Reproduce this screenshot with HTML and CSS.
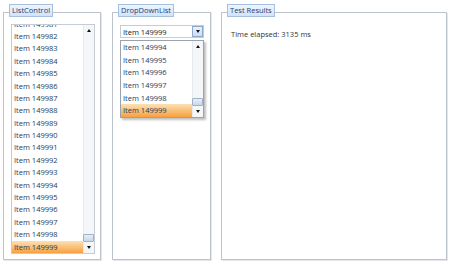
FILE: index.html
```html
<!DOCTYPE html>
<html>
<head>
<meta charset="utf-8">
<link rel="stylesheet" href="styles.css">
</head>
<body>
<div class="panels">
  <div class="group g-list">
    <div class="legend">ListControl</div>
    <div class="listbox">
      <div class="items">
        <div class="item">Item 149981</div>
        <div class="item">Item 149982</div>
        <div class="item">Item 149983</div>
        <div class="item">Item 149984</div>
        <div class="item">Item 149985</div>
        <div class="item">Item 149986</div>
        <div class="item">Item 149987</div>
        <div class="item">Item 149988</div>
        <div class="item">Item 149989</div>
        <div class="item">Item 149990</div>
        <div class="item">Item 149991</div>
        <div class="item">Item 149992</div>
        <div class="item">Item 149993</div>
        <div class="item">Item 149994</div>
        <div class="item">Item 149995</div>
        <div class="item">Item 149996</div>
        <div class="item">Item 149997</div>
        <div class="item">Item 149998</div>
        <div class="item sel">Item 149999</div>
      </div>
      <div class="vscroll">
        <div class="sb-up"><span class="tri-up"></span></div>
        <div class="sb-track"></div>
        <div class="sb-thumb"></div>
        <div class="sb-down"><span class="tri-down"></span></div>
      </div>
    </div>
  </div>
  <div class="group g-drop">
    <div class="legend">DropDownList</div>
    <div class="combo">
      <span class="combo-text">Item 149999</span>
      <span class="combo-btn"><span class="tri-down"></span></span>
    </div>
    <div class="popup">
      <div class="items">
        <div class="item">Item 149994</div>
        <div class="item">Item 149995</div>
        <div class="item">Item 149996</div>
        <div class="item">Item 149997</div>
        <div class="item">Item 149998</div>
        <div class="item sel">Item 149999</div>
      </div>
      <div class="vscroll">
        <div class="sb-up"><span class="tri-up"></span></div>
        <div class="sb-track"></div>
        <div class="sb-thumb"></div>
        <div class="sb-down"><span class="tri-down"></span></div>
      </div>
    </div>
  </div>
  <div class="group g-results">
    <div class="legend">Test Results</div>
    <div class="result-text">Time elapsed: 3135 ms</div>
  </div>
</div>
</body>
</html>
```
FILE: styles.css
```css
* { box-sizing: border-box; }
html, body {
  margin: 0;
  padding: 0;
  background: #ffffff;
  font-family: "Open Sans", "Noto Sans", sans-serif;
  font-size: 7.5px;
  color: #253b5a;
}
.panels {
  display: flex;
  padding: 12px 0 0 3px;
  height: 264px;
}
.group {
  position: relative;
  height: 248px;
  border: 1px solid #bcc3cc;
  box-shadow: inset 1px 1px 0 #ffffff, 1px 1px 0 #e3e6ea;
}
.g-list { width: 98px; margin-right: 11px; }
.g-drop { width: 99px; margin-right: 10px; }
.g-results { width: 226px; }
.legend {
  position: absolute;
  top: -9px;
  left: 5px;
  height: 13px;
  line-height: 11px;
  padding: 0 2px;
  color: #1f3f6e;
  font-size: 7.5px;
  background: linear-gradient(#eef5ff, #d3e3f8);
  border: 1px solid #a7c0e0;
}
.listbox {
  display: flex;
  margin: 11px 0 0 7px;
  width: 84px;
  height: 230px;
  border: 1px solid #c5ccd5;
  background: #ffffff;
}
.items {
  flex: 1;
  display: flex;
  flex-direction: column;
  justify-content: flex-end;
  overflow: hidden;
}
.item {
  flex: none;
  height: 12.4px;
  line-height: 12.4px;
  padding-left: 2px;
  white-space: nowrap;
}
.item.sel {
  background: linear-gradient(#fde0b4, #f7a13e);
  color: #253b5a;
}
.vscroll {
  width: 11px;
  display: flex;
  flex-direction: column;
  background: #f5f6f8;
  border-left: 1px solid #e6e9ed;
}
.sb-up, .sb-down {
  height: 11px;
  display: flex;
  align-items: center;
  justify-content: center;
}
.sb-track { flex: 1; }
.sb-thumb {
  height: 8px;
  margin: 0 0 0 -1px;
  background: linear-gradient(#e8eef7, #cbd7e7);
  border: 1px solid #a0b0c6;
  border-radius: 1px;
}
.tri-up {
  width: 0; height: 0;
  border-left: 2.5px solid transparent;
  border-right: 2.5px solid transparent;
  border-bottom: 3px solid #111;
}
.tri-down {
  width: 0; height: 0;
  border-left: 2.5px solid transparent;
  border-right: 2.5px solid transparent;
  border-top: 3px solid #111;
}
.combo {
  display: flex;
  align-items: center;
  margin: 12px 0 0 7px;
  width: 84px;
  height: 13px;
  border: 1px solid #c5ccd5;
  background: #fff;
}
.combo-text {
  flex: 1;
  padding-left: 2px;
  color: #1a1a1a;
}
.combo-btn {
  width: 11px;
  height: 11px;
  display: flex;
  align-items: center;
  justify-content: center;
  background: linear-gradient(#eaf2fc, #c9dbf2);
  border: 1px solid #8ea8cb;
}
.popup {
  display: flex;
  margin: 2px 0 0 7px;
  width: 84px;
  height: 78px;
  border: 1px solid #9aa3ad;
  background: #fff;
  box-shadow: 2px 2px 2px rgba(0,0,0,0.25);
}
.popup .item { height: 12.7px; line-height: 12.7px; }
.result-text {
  padding: 16px 0 0 9px;
  color: #333333;
  font-size: 7.5px;
}
```
